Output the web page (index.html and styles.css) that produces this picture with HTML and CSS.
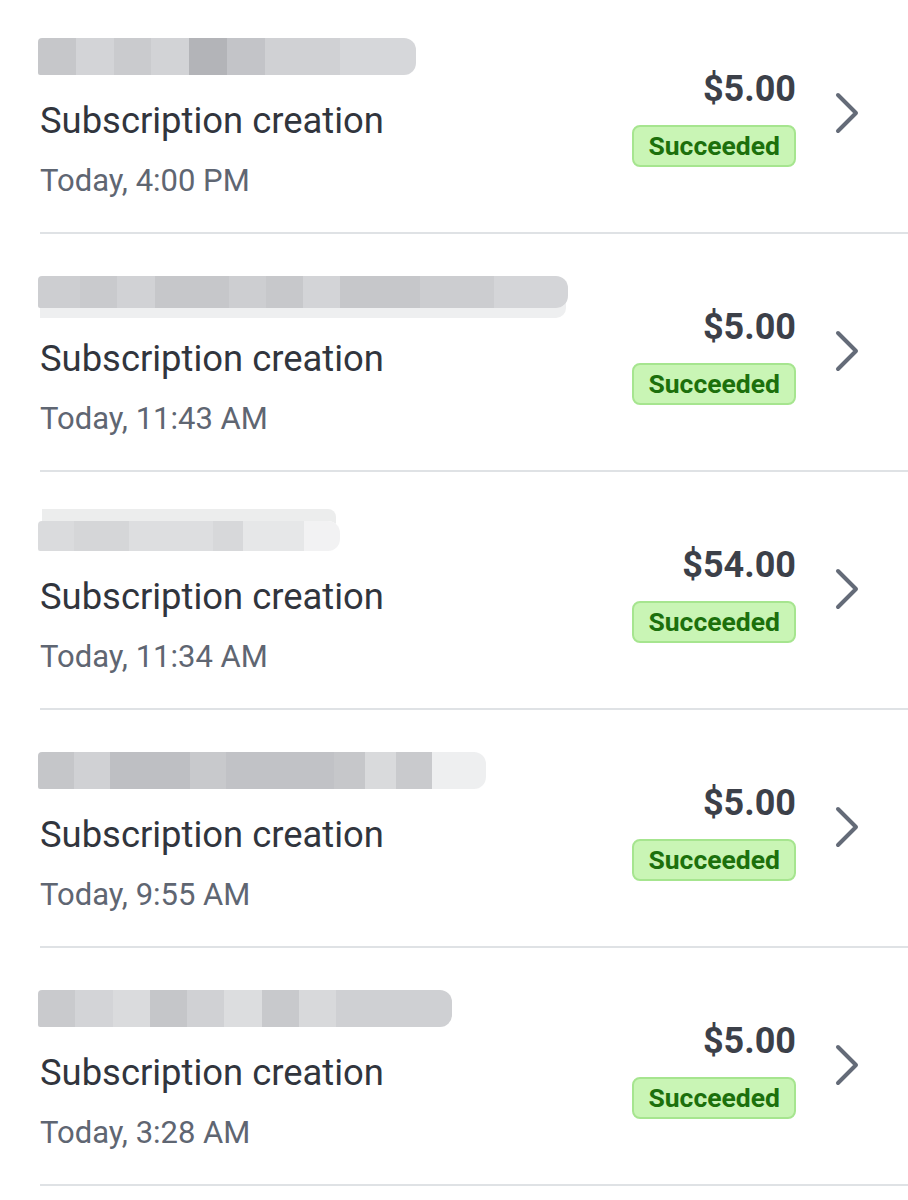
FILE: index.html
```html
<!DOCTYPE html>
<html lang="en">
<head>
  <meta charset="UTF-8" />
  <meta name="viewport" content="width=device-width, initial-scale=1.0"/>
  <title>Payments</title>
  <link rel="stylesheet" href="styles.css">
</head>
<body>
  <ul class="payments">
    <li class="payment">
      <div class="info">
        <div class="customer blur-a" style="width: 378px"></div>
        <div class="title">Subscription creation</div>
        <div class="date">Today, 4:00 PM</div>
      </div>
      <div class="summary">
        <div class="amount">$5.00</div>
        <span class="badge">Succeeded</span>
      </div>
      <svg class="chevron" viewBox="0 0 28 44"><path d="M4 4 L22 22 L4 40"/></svg>
    </li>

    <li class="payment">
      <div class="info">
        <div class="customer blur-b" style="width: 530px"></div>
        <div class="title">Subscription creation</div>
        <div class="date">Today, 11:43 AM</div>
      </div>
      <div class="summary">
        <div class="amount">$5.00</div>
        <span class="badge">Succeeded</span>
      </div>
      <svg class="chevron" viewBox="0 0 28 44"><path d="M4 4 L22 22 L4 40"/></svg>
    </li>

    <li class="payment">
      <div class="info">
        <div class="customer blur-c" style="width: 302px"></div>
        <div class="title">Subscription creation</div>
        <div class="date">Today, 11:34 AM</div>
      </div>
      <div class="summary">
        <div class="amount">$54.00</div>
        <span class="badge">Succeeded</span>
      </div>
      <svg class="chevron" viewBox="0 0 28 44"><path d="M4 4 L22 22 L4 40"/></svg>
    </li>

    <li class="payment">
      <div class="info">
        <div class="customer blur-d" style="width: 448px"></div>
        <div class="title">Subscription creation</div>
        <div class="date">Today, 9:55 AM</div>
      </div>
      <div class="summary">
        <div class="amount">$5.00</div>
        <span class="badge">Succeeded</span>
      </div>
      <svg class="chevron" viewBox="0 0 28 44"><path d="M4 4 L22 22 L4 40"/></svg>
    </li>

    <li class="payment">
      <div class="info">
        <div class="customer blur-e" style="width: 414px"></div>
        <div class="title">Subscription creation</div>
        <div class="date">Today, 3:28 AM</div>
      </div>
      <div class="summary">
        <div class="amount">$5.00</div>
        <span class="badge">Succeeded</span>
      </div>
      <svg class="chevron" viewBox="0 0 28 44"><path d="M4 4 L22 22 L4 40"/></svg>
    </li>
  </ul>
</body>
</html>
```

FILE: styles.css
```css
body {
  margin: 0;
  background: #fff;
  font-family: Roboto, "Liberation Sans", sans-serif;
  color: #3c4049;
  overflow: hidden;
}

.payments {
  list-style: none;
  margin: -4px 0 0 40px;
  padding: 0;
}

.payment {
  display: flex;
  align-items: center;
  box-sizing: border-box;
  height: 238px;
  padding-right: 46px;
  border-bottom: 2px solid #dfe2e5;
}

.info {
  flex: 1;
  display: flex;
  flex-direction: column;
  padding-top: 8px;
}

/* pixelated name, blurred out in the screenshot */
.customer {
  height: 37px;
  margin: 0 0 24px -2px;
  border-radius: 4px 12px 12px 2px;
}

.blur-a {
  background: linear-gradient(90deg,
    #c6c7ca 0 10%, #d3d4d7 10% 20%, #cacbce 20% 30%, #d2d3d6 30% 40%,
    #b3b4b8 40% 50%, #c3c4c8 50% 60%, #d0d1d4 60% 80%, #d6d7da 80% 100%);
}

.blur-b {
  height: 32px;
  margin-bottom: 29px;
  background: linear-gradient(90deg,
    #cdced1 0 8%, #c9cacd 8% 15%, #d1d2d5 15% 22%, #c6c7ca 22% 36%,
    #cdced1 36% 43%, #c7c8cb 43% 50%, #d3d4d7 50% 57%, #c6c7ca 57% 72%,
    #cccdd0 72% 86%, #d4d5d8 86% 100%);
  box-shadow: 0 12px 0 -2px #eeeff0;
}

.blur-c {
  height: 30px;
  margin-top: 7px;
  margin-bottom: 24px;
  background: linear-gradient(90deg,
    #dadbdd 0 12%, #d5d6d8 12% 30%, #dddee0 30% 58%, #d7d8da 58% 68%,
    #e6e7e8 68% 88%, #f2f2f3 88% 100%);
  box-shadow: 0 -16px 0 -4px #eceded;
}

.blur-d {
  background: linear-gradient(90deg,
    #c5c6c9 0 8%, #d0d1d4 8% 16%, #bebfc3 16% 34%, #c8c9cc 34% 42%,
    #c1c2c6 42% 66%, #c6c7ca 66% 73%, #d9dadc 73% 80%, #c9cacd 80% 88%,
    #eeeff0 88% 100%);
}

.blur-e {
  background: linear-gradient(90deg,
    #c9cacd 0 9%, #d3d4d7 9% 18%, #dadbdd 18% 27%, #c5c6c9 27% 36%,
    #d0d1d4 36% 45%, #dcdddf 45% 54%, #c8c9cc 54% 63%, #d8d9db 63% 72%,
    #cfd0d3 72% 100%);
}

.title {
  font-size: 36.4px;
  line-height: 44px;
  color: #31353d;
}

.date {
  margin-top: 20px;
  font-size: 31px;
  line-height: 36px;
  color: #5f6672;
}

.summary {
  display: flex;
  flex-direction: column;
  align-items: flex-end;
  gap: 15px;
  padding-top: 6px;
}

.amount {
  font-size: 36px;
  line-height: 42px;
  font-weight: bold;
  color: #3c4049;
}

.badge {
  display: inline-block;
  padding: 0 14px;
  line-height: 38px;
  font-size: 26.5px;
  font-weight: bold;
  color: #1c700c;
  background: #c9f5b5;
  border: 2px solid #a6e58f;
  border-radius: 8px;
}

.chevron {
  width: 28px;
  height: 44px;
  margin-left: 38px;
  margin-top: -2px;
  fill: none;
  stroke: #646b78;
  stroke-width: 4;
  stroke-linecap: round;
  stroke-linejoin: round;
}
```
